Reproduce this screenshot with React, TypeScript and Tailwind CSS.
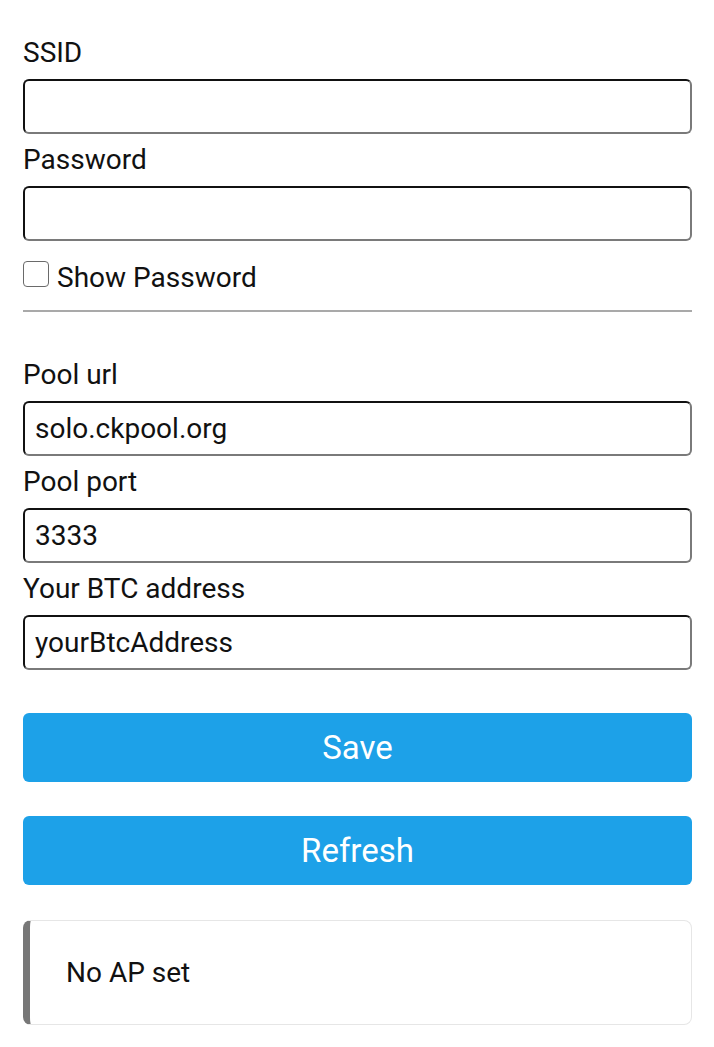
import React, { useState } from "react";

const font = { fontFamily: "Roboto, 'Noto Sans', Arial, sans-serif" };

const Field = ({ label, value, type = "text" }: { label: string; value?: string; type?: string }) => (
  <>
    <label className="block mt-[10px] mb-[10px] text-[28px] leading-[32px] text-[#111]">{label}</label>
    <input
      type={type}
      defaultValue={value}
      className="block w-full h-[55px] px-[10px] text-[28px] text-[#111] rounded-[6px] border-2 border-t-[#111] border-l-[#111] border-r-[#7a7a7a] border-b-[#7a7a7a] outline-none bg-white"
    />
  </>
);

export default function App() {
  const [show, setShow] = useState(false);
  return (
    <div style={font} className="min-h-screen bg-white pl-[23px] pr-[22px] pt-[27px] pb-[20px]">
      <Field label="SSID" />
      <Field label="Password" type={show ? "text" : "password"} />

      <label className="flex items-start mt-[20px] text-[28px] leading-[33px] text-[#111]">
        <span
          onClick={() => setShow(!show)}
          className="w-[26px] h-[26px] shrink-0 rounded-[4px] border-[1.5px] border-[#6a6a6a] bg-white mr-[8px]"
        />
        <span>Show Password</span>
      </label>

      <hr className="mt-[16px] mb-[47px] border-0 h-[2px] bg-[#a9a9a9]" />

      <Field label="Pool url" value="solo.ckpool.org" />
      <Field label="Pool port" value="3333" />
      <Field label="Your BTC address" value="yourBtcAddress" />

      <button className="block w-full mt-[43px] h-[69px] rounded-[6px] bg-[#1da1e8] text-white text-[33px]">
        Save
      </button>
      <button className="block w-full mt-[34px] h-[69px] rounded-[6px] bg-[#1da1e8] text-white text-[33px]">
        Refresh
      </button>

      <div className="mt-[35px] h-[105px] flex items-center rounded-[8px] border border-[#e6e6e6] border-l-[7px] border-l-[#777] pl-[36px] text-[28px] text-[#111]">
        No AP set
      </div>
    </div>
  );
}
